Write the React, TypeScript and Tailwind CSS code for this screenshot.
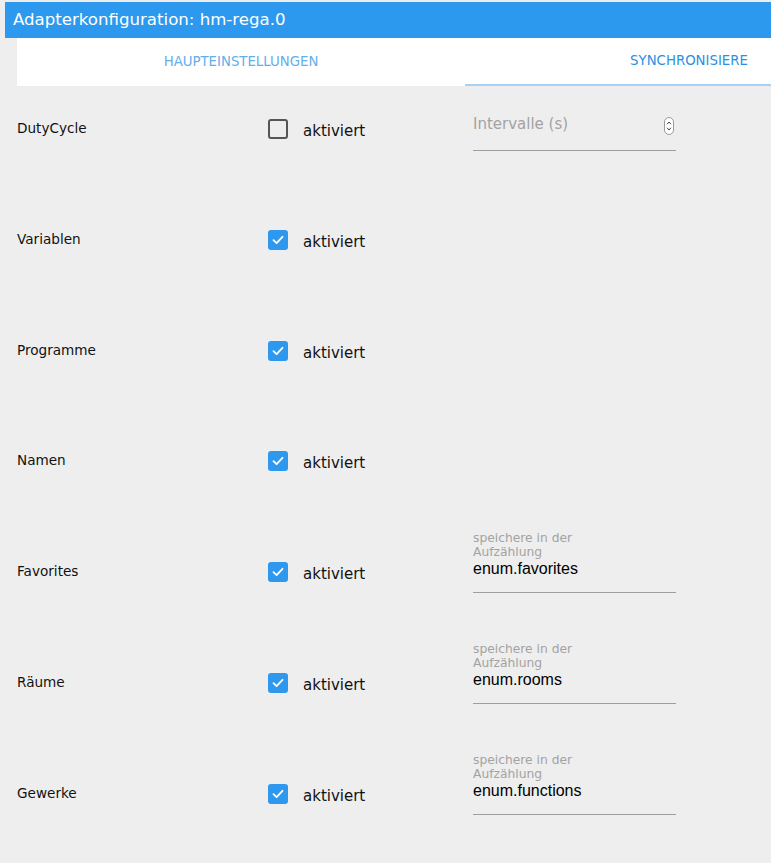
import React from 'react';

type Row = {
  label: string;
  checked: boolean;
  field?: 'interval' | string;
};

const rows: Row[] = [
  { label: 'DutyCycle', checked: false, field: 'interval' },
  { label: 'Variablen', checked: true },
  { label: 'Programme', checked: true },
  { label: 'Namen', checked: true },
  { label: 'Favorites', checked: true, field: 'enum.favorites' },
  { label: 'Räume', checked: true, field: 'enum.rooms' },
  { label: 'Gewerke', checked: true, field: 'enum.functions' },
];

const Checkbox = ({ checked }: { checked: boolean }) =>
  checked ? (
    <div className="w-[20px] h-[20px] rounded-[3px] bg-[#2d98ee] flex items-center justify-center">
      <svg width="14" height="14" viewBox="0 0 14 14" fill="none">
        <path d="M2.5 7.2 L5.6 10.2 L11.5 3.8" stroke="white" strokeWidth="1.8" strokeLinecap="round" strokeLinejoin="round" />
      </svg>
    </div>
  ) : (
    <div className="w-[20px] h-[20px] rounded-[3px] border-2 border-[#555555]" />
  );

const Spinner = () => (
  <div className="absolute right-[2px] top-[3px] w-[10px] h-[18px] rounded-full border border-[#9a9a9a] bg-white flex flex-col items-center justify-center gap-[2px]">
    <svg width="6" height="4" viewBox="0 0 6 4" fill="none">
      <path d="M1 3.2 L3 1 L5 3.2" stroke="#444" strokeWidth="1" />
    </svg>
    <svg width="6" height="4" viewBox="0 0 6 4" fill="none">
      <path d="M1 0.8 L3 3 L5 0.8" stroke="#444" strokeWidth="1" />
    </svg>
  </div>
);

const Field = ({ field }: { field: string }) => {
  if (field === 'interval') {
    return (
      <div className="relative w-[203px] mt-[6px] pb-[16px] border-b border-[#9e9e9e]">
        <div className="text-[15px] leading-[20px] text-[#a3a3a3] font-['DejaVu_Sans',sans-serif]">
          Intervalle (s)
        </div>
        <Spinner />
      </div>
    );
  }
  return (
    <div className="w-[203px] mt-[-20px] pb-[13px] border-b border-[#9e9e9e]">
      <div className="text-[12.3px] leading-[14px] text-[#a3a3a3] font-['DejaVu_Sans',sans-serif] w-[110px]">
        speichere in der Aufzählung
      </div>
      <div className="text-[16px] leading-[20px] text-black font-['Liberation_Sans',sans-serif]">
        {field}
      </div>
    </div>
  );
};

export default function App() {
  return (
    <div className="w-[771px] h-[863px] overflow-hidden bg-[#eeeeee] font-['DejaVu_Sans',sans-serif] pt-[2px]">
      <div className="ml-[5px] h-[36px] bg-[#2d99ee] flex items-center pl-[8px]">
        <h1 className="text-white text-[16.6px] leading-none">Adapterkonfiguration: hm-rega.0</h1>
      </div>
      <div className="ml-[17px] h-[48px] bg-white flex w-[896px]">
        <div className="w-[448px] flex items-center justify-center text-[13.3px] text-[#64aeea]">
          HAUPTEINSTELLUNGEN
        </div>
        <div className="w-[448px] flex flex-col">
          <div className="flex-1 flex items-center justify-center text-[13.3px] text-[#2b8fe3]">
            SYNCHRONISIERE
          </div>
          <div className="h-[2px] bg-[#a7d0f5]" />
        </div>
      </div>
      <div className="pt-[22px] px-[17px]">
        {rows.map((row) => (
          <div key={row.label} className="h-[110.8px] flex items-start">
            <div className="w-[251px] pt-[11px] text-[13.6px] leading-[19px] text-[#111]">
              {row.label}
            </div>
            <div className="w-[205px] flex items-start">
              <div className="mt-[11px]">
                <Checkbox checked={row.checked} />
              </div>
              <span className="ml-[15px] mt-[13px] text-[15px] leading-[20px] text-[#111]">aktiviert</span>
            </div>
            {row.field && <Field field={row.field} />}
          </div>
        ))}
      </div>
    </div>
  );
}
